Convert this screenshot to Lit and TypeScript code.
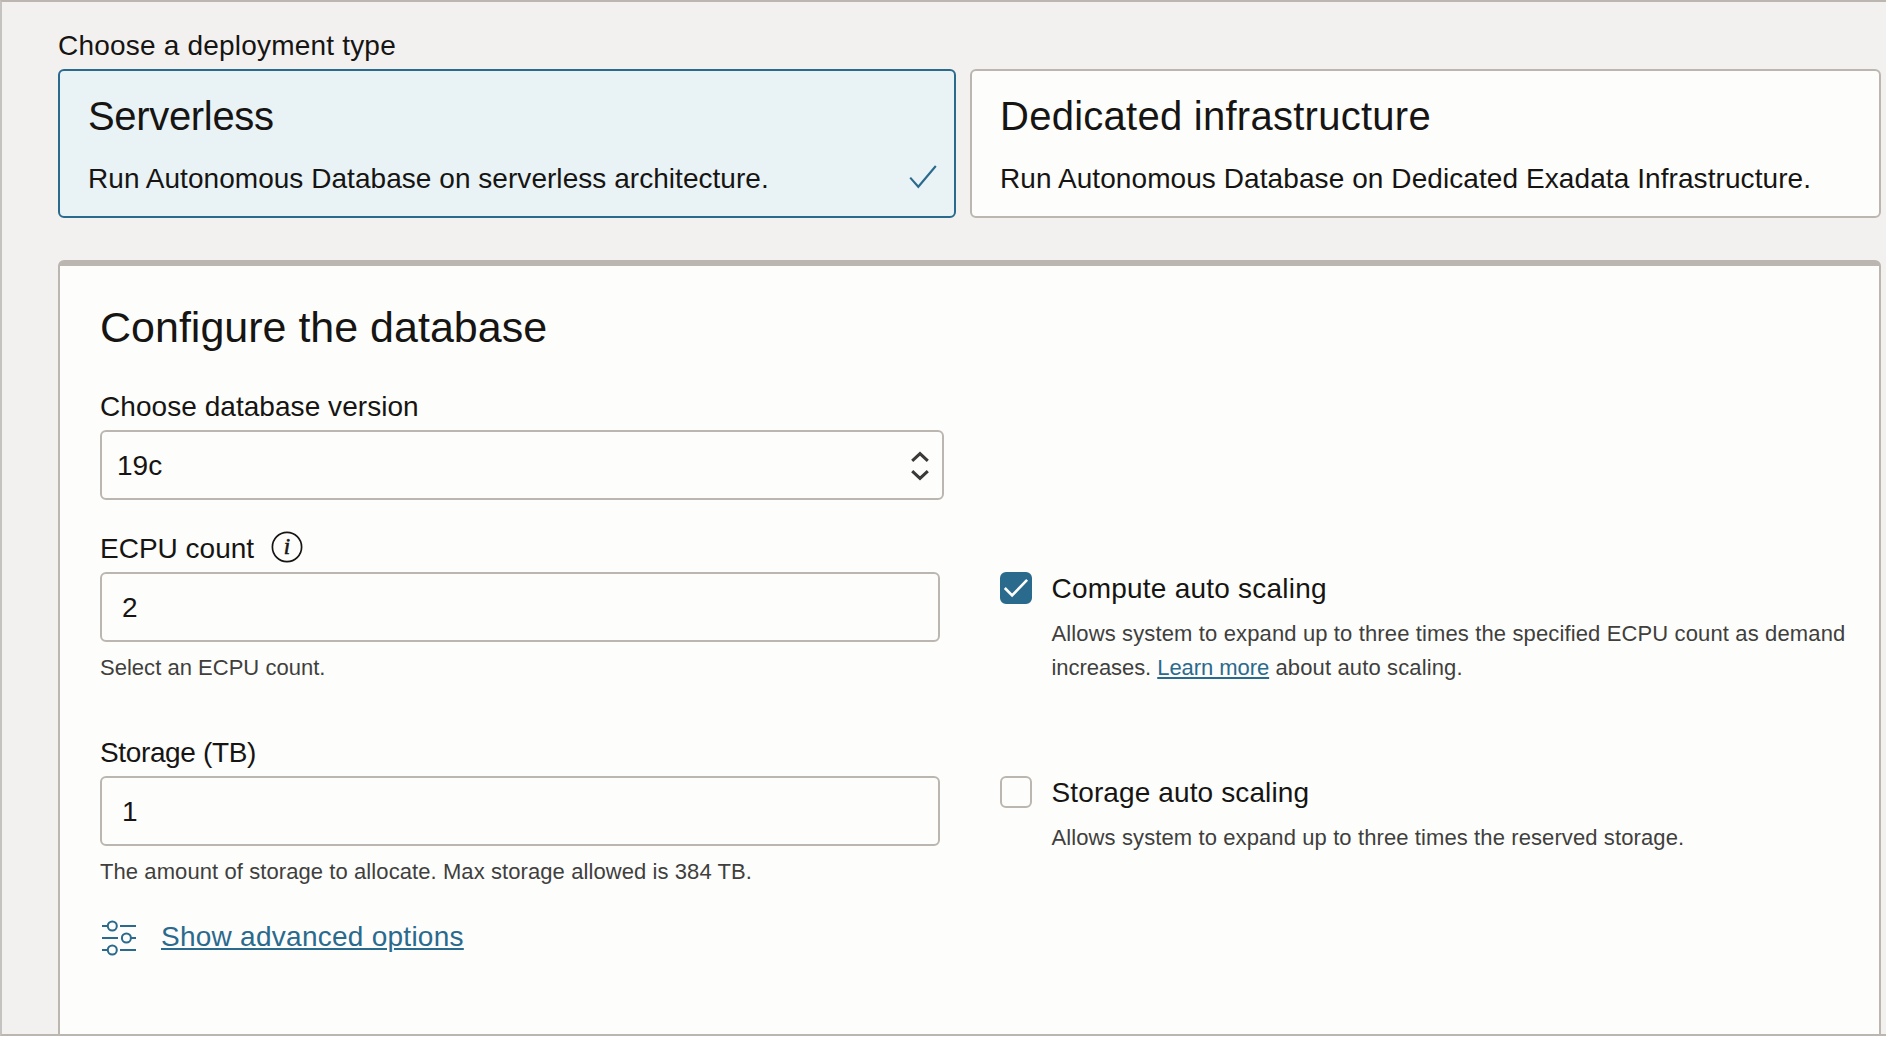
import { LitElement, html, css, svg } from "lit";
import { customElement, property } from "lit/decorators.js";

const checkIcon = (cls: string) => html`
  <svg class=${cls} viewBox="0 0 28 24" aria-hidden="true">
    ${svg`<path d="M1.2 12.6 L9.3 21.8 L26.8 1" fill="none" stroke="currentColor" stroke-width="2.1" />`}
  </svg>
`;

@customElement("deployment-card")
class DeploymentCard extends LitElement {
  @property() heading = "";
  @property() description = "";
  @property({ type: Boolean, reflect: true }) selected = false;

  static styles = css`
    :host {
      display: block;
      box-sizing: border-box;
      height: 149px;
      padding: 21px 17px 20px 28px;
      border: 2px solid #bcb6b1;
      border-radius: 6px;
      background: #fdfdfc;
      color: #161513;
    }
    :host([selected]) {
      border-color: #2a6a8d;
      background: #e9f2f5;
    }
    .heading {
      margin: 0 0 20px;
      font-size: 40px;
      font-weight: 400;
      line-height: 48px;
      letter-spacing: 0.26px;
    }
    :host([selected]) .heading {
      letter-spacing: -0.33px;
    }
    .row {
      display: flex;
      justify-content: space-between;
      height: 36px;
    }
    .description {
      font-size: 28px;
      line-height: 38px;
      letter-spacing: 0.081px;
      white-space: nowrap;
    }
    :host([selected]) .description {
      letter-spacing: 0.043px;
    }
    .check {
      width: 28px;
      height: 24px;
      margin-top: 5px;
      color: #2a6a8d;
    }
  `;

  render() {
    return html`
      <h3 class="heading">${this.heading}</h3>
      <div class="row">
        <span class="description">${this.description}</span>
        ${this.selected ? checkIcon("check") : null}
      </div>
    `;
  }
}

@customElement("scaling-option")
class ScalingOption extends LitElement {
  @property() label = "";
  @property({ type: Boolean, reflect: true }) checked = false;

  static styles = css`
    :host {
      display: flex;
      align-items: flex-start;
      gap: 19.5px;
    }
    .box {
      box-sizing: border-box;
      flex: none;
      width: 32px;
      height: 32px;
      margin-top: 2px;
      border: 2px solid #bcb6b1;
      border-radius: 6px;
      background: #fdfdfc;
    }
    :host([checked]) .box {
      border-color: #2a6a8d;
      background: #2a6a8d;
    }
    .box svg {
      display: block;
      width: 28px;
      height: 28px;
    }
    .label {
      font-size: 28px;
      line-height: 38px;
      letter-spacing: 0.12px;
      color: #161513;
    }
    :host([checked]) .label {
      letter-spacing: 0.22px;
    }
    .help {
      margin-top: 9px;
      font-size: 22px;
      line-height: 34px;
      letter-spacing: 0.105px;
      white-space: nowrap;
      color: #403f3d;
    }
  `;

  render() {
    return html`
      <span class="box" role="checkbox" aria-checked=${this.checked ? "true" : "false"}>
        ${this.checked
          ? html`<svg viewBox="0 0 28 28">
              <path d="M2.8 14 L10.1 21.5 L25.1 5.8" fill="none" stroke="#fff" stroke-width="2.6" />
            </svg>`
          : null}
      </span>
      <div>
        <div class="label">${this.label}</div>
        <div class="help"><slot></slot></div>
      </div>
    `;
  }
}

@customElement("app-root")
class AppRoot extends LitElement {
  static styles = css`
    :host {
      display: block;
      font-family: "Liberation Sans", Arial, sans-serif;
      color: #161513;
      background: #fdfdfc;
    }
    .frame {
      box-sizing: border-box;
      display: flex;
      flex-direction: column;
      height: 1036px;
      padding: 25px 5px 0 56px;
      border: solid #bcb6b1;
      border-width: 2px 0 2px 2px;
      border-left-color: #c5c3bf;
      background: #f3f1f0;
      overflow: hidden;
    }
    .label {
      display: flex;
      align-items: flex-start;
      height: 36px;
      margin-bottom: 6px;
      font-size: 28px;
      line-height: 38px;
      white-space: nowrap;
    }
    .label-deploy {
      letter-spacing: 0.2px;
    }
    .label-version {
      letter-spacing: 0.05px;
    }
    .label-storage {
      letter-spacing: -0.36px;
    }
    .cards {
      display: grid;
      grid-template-columns: 898px 911px;
      gap: 14px;
      margin-bottom: 42px;
    }
    .panel {
      box-sizing: border-box;
      flex: 1;
      padding: 35px 34px 0 40px;
      border: 2px solid #bcb6b1;
      border-top-width: 6px;
      border-bottom: 0;
      border-radius: 6px 6px 0 0;
      background: #fdfdfc;
    }
    .title {
      margin: 0 0 35px;
      font-size: 43px;
      font-weight: 400;
      line-height: 52px;
    }
    .field {
      box-sizing: border-box;
      display: flex;
      align-items: center;
      height: 70px;
      padding: 2px 19px 0 20px;
      border: 2px solid #bcb6b1;
      border-radius: 6px;
      font-size: 28px;
      line-height: 36px;
    }
    .select {
      width: 844px;
      justify-content: space-between;
      padding: 2px 12px 0 15px;
      margin-bottom: 30px;
    }
    .chevrons {
      width: 20px;
      height: 32px;
    }
    .grid {
      display: grid;
      grid-template-columns: 840px 845px;
      column-gap: 60px;
      row-gap: 49px;
    }
    .option {
      margin-top: 40px;
    }
    .help {
      height: 34px;
      margin-top: 8px;
      font-size: 22px;
      line-height: 36px;
      letter-spacing: 0.02px;
      color: #403f3d;
    }
    .help-storage {
      letter-spacing: 0.085px;
    }
    .info {
      width: 32px;
      height: 32px;
      margin: 1px 0 0 17px;
    }
    .info-letter {
      font: italic 23px "Liberation Serif", serif;
      stroke: #161513;
      stroke-width: 0.6px;
    }
    a {
      color: #2a6a8d;
      text-decoration: underline;
      text-decoration-thickness: 2px;
    }
    .learn {
      text-underline-offset: 2px;
      letter-spacing: -0.06px;
    }
    .wide {
      letter-spacing: 0.132px;
    }
    .lead {
      letter-spacing: -0.06px;
    }
    .tail {
      letter-spacing: 0.14px;
    }
    .advanced {
      display: flex;
      align-items: flex-start;
      gap: 25px;
      height: 36px;
      margin-top: 30px;
    }
    .advanced a {
      font-size: 28px;
      line-height: 38px;
      letter-spacing: 0.26px;
      text-underline-offset: 2px;
    }
    .sliders {
      width: 34px;
      height: 36px;
      margin: 2px 0 0 2px;
      color: #2a6a8d;
    }
  `;

  render() {
    return html`
      <main class="frame">
        <div class="label label-deploy">Choose a deployment type</div>
        <div class="cards">
          <deployment-card
            selected
            heading="Serverless"
            description="Run Autonomous Database on serverless architecture."
          ></deployment-card>
          <deployment-card
            heading="Dedicated infrastructure"
            description="Run Autonomous Database on Dedicated Exadata Infrastructure."
          ></deployment-card>
        </div>

        <section class="panel">
          <h2 class="title">Configure the database</h2>

          <div class="label label-version">Choose database version</div>
          <div class="field select">
            <span>19c</span>
            <svg class="chevrons" viewBox="0 0 20 32" aria-hidden="true">
              <g fill="none" stroke="#3a3937" stroke-width="3.1">
                <path d="M2.2 10.8 L10 3.7 L17.8 10.8" />
                <path d="M2.2 21.2 L10 28.3 L17.8 21.2" />
              </g>
            </svg>
          </div>

          <div class="grid">
            <div>
              <div class="label">
                ECPU count
                <svg class="info" viewBox="0 0 32 32" aria-hidden="true">
                  <circle cx="16" cy="16" r="14.6" fill="none" stroke="#161513" stroke-width="1.7" />
                  <text class="info-letter" x="16" y="22.6" text-anchor="middle" fill="#161513">i</text>
                </svg>
              </div>
              <div class="field">2</div>
              <div class="help">Select an ECPU count.</div>
            </div>
            <scaling-option class="option" label="Compute auto scaling" checked>
              <span class="wide">Allows system to expand up to three times the specified ECPU count as demand</span><br />
              <span class="lead">increases. </span><a class="learn">Learn more</a><span class="tail"> about auto scaling.</span>
            </scaling-option>

            <div>
              <div class="label label-storage">Storage (TB)</div>
              <div class="field">1</div>
              <div class="help help-storage">The amount of storage to allocate. Max storage allowed is 384 TB.</div>
            </div>
            <scaling-option class="option" label="Storage auto scaling">
              Allows system to expand up to three times the reserved storage.
            </scaling-option>
          </div>

          <div class="advanced">
            <svg class="sliders" viewBox="0 0 34 36" aria-hidden="true">
              <g fill="none" stroke="currentColor" stroke-width="2">
                <path d="M0 6H5.5M18 6H34M0 18H16M29 18H34M0 30H5.5M18 30H34" />
                <circle cx="10.3" cy="6" r="4.5" />
                <circle cx="24.4" cy="18" r="4.5" />
                <circle cx="10.3" cy="30" r="4.5" />
              </g>
            </svg>
            <a>Show advanced options</a>
          </div>
        </section>
      </main>
    `;
  }
}
